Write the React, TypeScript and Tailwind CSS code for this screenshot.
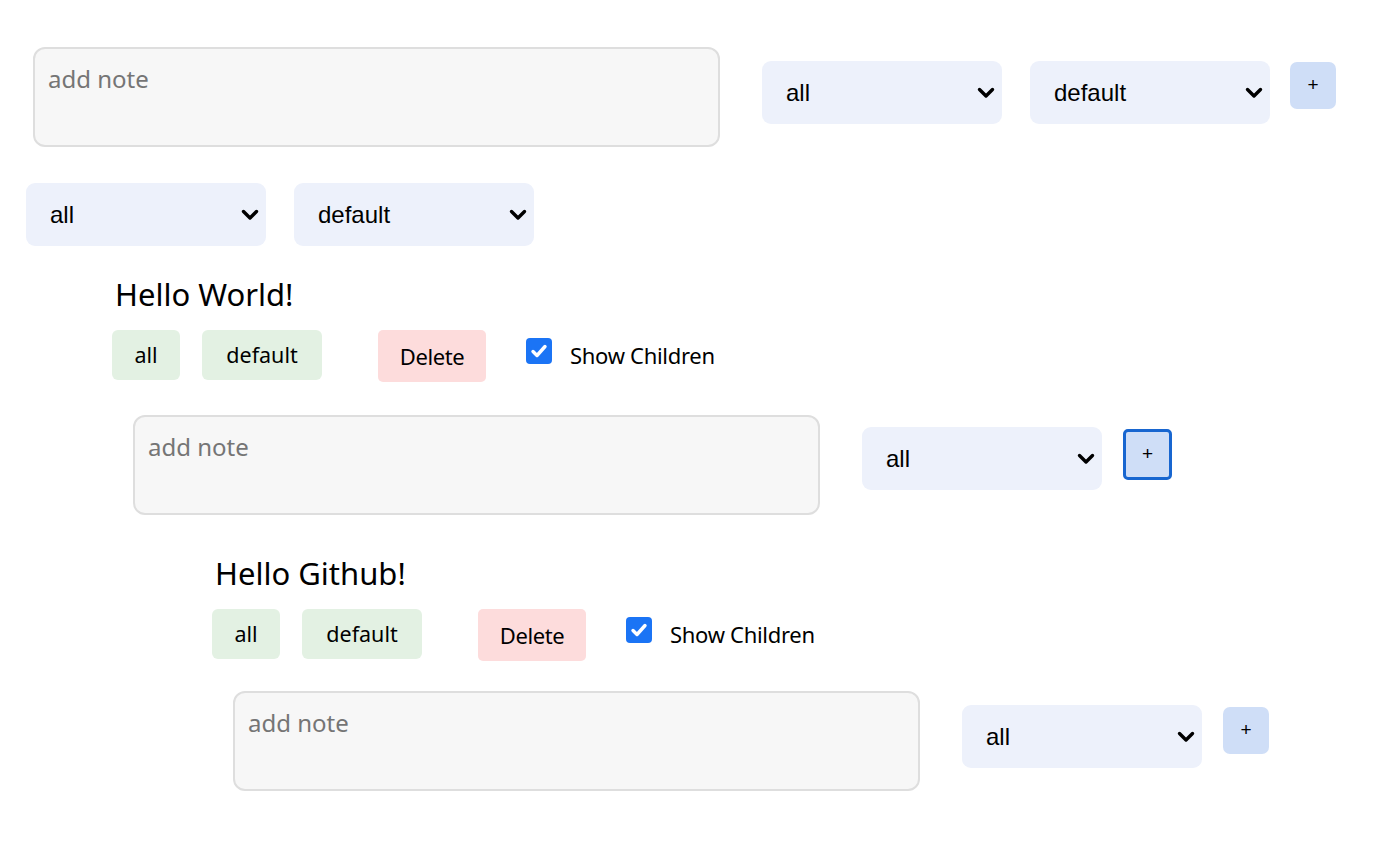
import { useState } from 'react';

// Shared fonts
const UI = { fontFamily: '"Noto Sans", "Open Sans", sans-serif' };
const ARIAL = { fontFamily: '"Liberation Sans", Arial, sans-serif' };

const ChevronIcon = () => (
  <svg className="w-[18px] h-[12px]" viewBox="0 0 18 12" fill="none" stroke="currentColor" strokeWidth={3.4} strokeLinecap="round" strokeLinejoin="round">
    <path d="M2.5 2.5L9 9l6.5-6.5" />
  </svg>
);

interface SelectProps {
  value: string;
  options: string[];
  className?: string;
}

const Select = ({ value, options, className = '' }: SelectProps) => (
  <div className={`relative w-[240px] h-[63px] shrink-0 ${className}`}>
    <select
      defaultValue={value}
      style={ARIAL}
      className="appearance-none w-full h-full bg-[#edf1fb] rounded-[9px] pl-[24px] pr-10 text-[24px] text-black outline-none"
    >
      {options.map((o) => (
        <option key={o} value={o}>{o}</option>
      ))}
    </select>
    <span className="pointer-events-none absolute right-[7px] top-1/2 -translate-y-1/2 text-black">
      <ChevronIcon />
    </span>
  </div>
);

const FILTERS = ['all', 'active', 'done'];
const SORTS = ['default', 'newest', 'oldest'];

const NoteInput = () => (
  <textarea
    placeholder="add note"
    style={UI}
    className="w-[687px] h-[100px] shrink-0 resize-none bg-[#f7f7f7] border-2 border-[#dedede] rounded-[12px] px-[13px] py-[12px] text-[24px] text-gray-900 placeholder-[#757575] outline-none"
  />
);

const PlusButton = ({ focused, className = '' }: { focused?: boolean; className?: string }) => (
  <button
    type="button"
    style={ARIAL}
    className={`shrink-0 flex items-center justify-center bg-[#cfdef7] text-black text-[19px] ${
      focused ? 'w-[49px] h-[51px] border-[3px] border-[#1866d0] rounded-[5px]' : 'w-[46px] h-[47px] rounded-[7px]'
    } ${className}`}
  >
    +
  </button>
);

const CheckIcon = () => (
  <svg className="w-[20px] h-[20px]" viewBox="0 0 20 20" fill="none" stroke="white" strokeWidth={3.4} strokeLinecap="round" strokeLinejoin="round">
    <path d="M4 10.5l4 4 8-9" />
  </svg>
);

interface NodeProps {
  title: string;
  noteTop: string;
  selectTop: string;
  plusTop: string;
  focused?: boolean;
  children?: React.ReactNode;
}

const TreeNode = ({ title, noteTop, selectTop, plusTop, focused, children }: NodeProps) => {
  const [showChildren, setShowChildren] = useState(true);
  return (
    <div className="pl-[100px]" style={UI}>
      <h2 className="text-[31px] leading-[38px] text-black pl-[3px]">{title}</h2>
      <div className="flex items-start mt-[17px] text-[21.5px] text-black">
        <span className="w-[68px] h-[50px] flex items-center justify-center bg-[#e3f1e3] rounded-[6px]">all</span>
        <span className="ml-[22px] w-[120px] h-[50px] flex items-center justify-center bg-[#e3f1e3] rounded-[6px]">default</span>
        <button type="button" className="ml-[56px] w-[108px] h-[52px] flex items-center justify-center bg-[#fddcdc] rounded-[5px] text-[22px] tracking-[-0.4px]">
          Delete
        </button>
        <button
          type="button"
          onClick={() => setShowChildren(!showChildren)}
          className="ml-[40px] mt-[8px] w-[26px] h-[26px] flex items-center justify-center bg-[#1b74f5] rounded-[4px]"
        >
          {showChildren && <CheckIcon />}
        </button>
        <span className="ml-[18px] mt-[9px] leading-[32px] text-[22px] tracking-[-0.3px]">Show Children</span>
      </div>
      <div className={`flex items-start pl-[21px] ${noteTop}`}>
        <NoteInput />
        <Select value="all" options={FILTERS} className={`ml-[42px] ${selectTop}`} />
        <PlusButton focused={focused} className={`ml-[21px] ${plusTop}`} />
      </div>
      {showChildren && children}
    </div>
  );
};

export default function App() {
  return (
    <div className="min-h-screen bg-white pt-[47px] pb-10">
      <div className="flex items-start pl-[33px]">
        <NoteInput />
        <Select value="all" options={FILTERS} className="ml-[42px] mt-[14px]" />
        <Select value="default" options={SORTS} className="ml-[28px] mt-[14px]" />
        <PlusButton className="ml-[20px] mt-[15px]" />
      </div>
      <div className="flex items-start pl-[26px] mt-[36px]">
        <Select value="all" options={FILTERS} />
        <Select value="default" options={SORTS} className="ml-[28px]" />
      </div>
      <div className="pl-[12px] mt-[29px]">
        <TreeNode title="Hello World!" noteTop="mt-[33px]" selectTop="mt-[12px]" plusTop="mt-[14px]" focused>
          <div className="mt-[39px]">
            <TreeNode title="Hello Github!" noteTop="mt-[30px]" selectTop="mt-[14px]" plusTop="mt-[16px]" />
          </div>
        </TreeNode>
      </div>
    </div>
  );
}
